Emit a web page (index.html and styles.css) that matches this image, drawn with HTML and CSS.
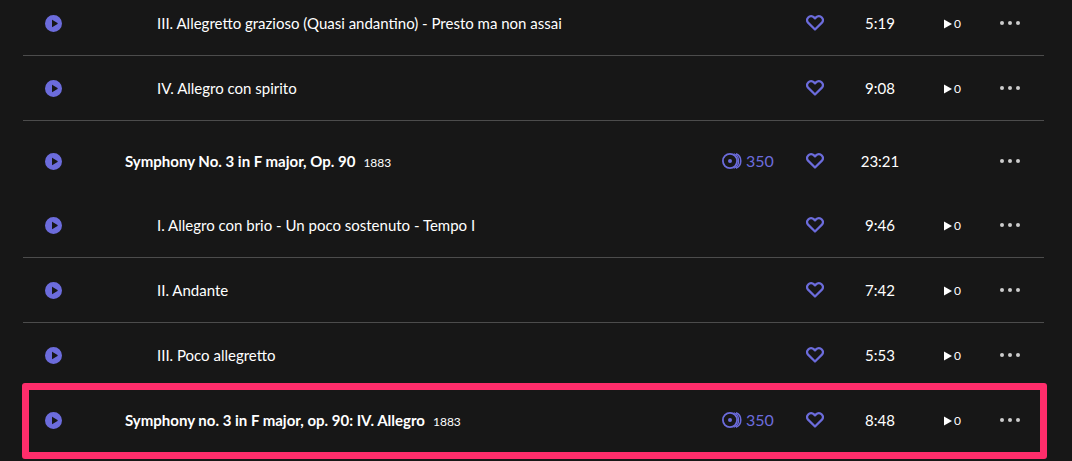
FILE: index.html
```html
<!DOCTYPE html>
<html lang="en">

<head>
	<meta charset="utf-8" />
	<meta name="viewport" content="width=device-width, initial-scale=1" />
	<title>Tracks</title>
	<link rel="stylesheet" href="styles.css">
</head>

<body>
	<!-- shared icons -->
	<svg class="sprite" aria-hidden="true">
		<symbol id="icon-play" viewBox="0 0 17 17">
			<path fill="currentColor" fill-rule="evenodd" d="M8.500 0a8.500 8.500 0 1 0 0 17a8.500 8.500 0 0 0 0-17zM7 5.200v6.600c0 .3.300.4.500.3l5-3.200c.3-.2.3-.6 0-.8l-5-3.200c-.2-.1-.5 0-.5.3z" />
		</symbol>
		<symbol id="icon-heart" viewBox="0 0 18 16">
			<path fill="none" stroke="currentColor" stroke-width="2.200" stroke-linejoin="round" d="M9 14.500 2.300 7.900C.8 6.300.8 4 2.200 2.500c1.600-1.700 4.200-1.700 5.800-.1l1 1 1-1c1.600-1.600 4.200-1.600 5.800.1 1.400 1.500 1.400 3.800-.1 5.400z" />
		</symbol>
		<symbol id="icon-versions" viewBox="0 0 20 16">
			<g fill="none" stroke="currentColor">
				<circle cx="8" cy="8" r="7.100" stroke-width="1.800" />
				<path stroke-width="1.200" d="M11.800.7a7.900 7.900 0 0 1 0 14.600" />
				<path stroke-width="1.500" d="M14 .8a7.800 7.800 0 0 1 0 14.400" />
			</g>
			<circle cx="8" cy="8" r="2" fill="currentColor" />
		</symbol>
		<symbol id="icon-count" viewBox="0 0 8 10">
			<path fill="currentColor" d="M0 .5v9L8 5z" />
		</symbol>
		<symbol id="icon-more" viewBox="0 0 20 4">
			<g fill="currentColor">
				<circle cx="2" cy="2" r="2" />
				<circle cx="10" cy="2" r="2" />
				<circle cx="18" cy="2" r="2" />
			</g>
		</symbol>
	</svg>

	<ul class="tracks">
		<li class="track">
			<button class="play" type="button" aria-label="Play"><svg><use href="#icon-play" /></svg></button>
			<div class="title part">III. Allegretto grazioso (Quasi andantino) - Presto ma non assai</div>
			<button class="like" type="button" aria-label="Like"><svg><use href="#icon-heart" /></svg></button>
			<span class="time">5:19</span>
			<span class="count"><svg><use href="#icon-count" /></svg>0</span>
			<button class="more" type="button" aria-label="More"><svg><use href="#icon-more" /></svg></button>
		</li>
		<li class="track">
			<button class="play" type="button" aria-label="Play"><svg><use href="#icon-play" /></svg></button>
			<div class="title part">IV. Allegro con spirito</div>
			<button class="like" type="button" aria-label="Like"><svg><use href="#icon-heart" /></svg></button>
			<span class="time">9:08</span>
			<span class="count"><svg><use href="#icon-count" /></svg>0</span>
			<button class="more" type="button" aria-label="More"><svg><use href="#icon-more" /></svg></button>
		</li>
		<li class="track work">
			<button class="play" type="button" aria-label="Play"><svg><use href="#icon-play" /></svg></button>
			<div class="title"><b>Symphony No. 3 in F major, Op. 90</b><small>1883</small></div>
			<a class="versions" href="#"><svg><use href="#icon-versions" /></svg>350</a>
			<button class="like" type="button" aria-label="Like"><svg><use href="#icon-heart" /></svg></button>
			<span class="time">23:21</span>
			<button class="more" type="button" aria-label="More"><svg><use href="#icon-more" /></svg></button>
		</li>
		<li class="track">
			<button class="play" type="button" aria-label="Play"><svg><use href="#icon-play" /></svg></button>
			<div class="title part">I. Allegro con brio - Un poco sostenuto - Tempo I</div>
			<button class="like" type="button" aria-label="Like"><svg><use href="#icon-heart" /></svg></button>
			<span class="time">9:46</span>
			<span class="count"><svg><use href="#icon-count" /></svg>0</span>
			<button class="more" type="button" aria-label="More"><svg><use href="#icon-more" /></svg></button>
		</li>
		<li class="track">
			<button class="play" type="button" aria-label="Play"><svg><use href="#icon-play" /></svg></button>
			<div class="title part">II. Andante</div>
			<button class="like" type="button" aria-label="Like"><svg><use href="#icon-heart" /></svg></button>
			<span class="time">7:42</span>
			<span class="count"><svg><use href="#icon-count" /></svg>0</span>
			<button class="more" type="button" aria-label="More"><svg><use href="#icon-more" /></svg></button>
		</li>
		<li class="track">
			<button class="play" type="button" aria-label="Play"><svg><use href="#icon-play" /></svg></button>
			<div class="title part">III. Poco allegretto</div>
			<button class="like" type="button" aria-label="Like"><svg><use href="#icon-heart" /></svg></button>
			<span class="time">5:53</span>
			<span class="count"><svg><use href="#icon-count" /></svg>0</span>
			<button class="more" type="button" aria-label="More"><svg><use href="#icon-more" /></svg></button>
		</li>
		<li class="track marked">
			<button class="play" type="button" aria-label="Play"><svg><use href="#icon-play" /></svg></button>
			<div class="title"><b>Symphony no. 3 in F major, op. 90: IV. Allegro</b><small>1883</small></div>
			<a class="versions" href="#"><svg><use href="#icon-versions" /></svg>350</a>
			<button class="like" type="button" aria-label="Like"><svg><use href="#icon-heart" /></svg></button>
			<span class="time">8:48</span>
			<span class="count"><svg><use href="#icon-count" /></svg>0</span>
			<button class="more" type="button" aria-label="More"><svg><use href="#icon-more" /></svg></button>
		</li>
	</ul>
</body>

</html>
```
FILE: styles.css
```css
body {
	display: flow-root;
	min-height: 100vh;
	margin: 0;
	background-color: #171717;
	color: #fff;
	font: 15px/20px Lato, sans-serif;
}

.sprite {
	display: none;
}

svg {
	display: block;
	flex: none;
}

button {
	display: flex;
	padding: 0;
	border: 0;
	background: none;
	color: inherit;
	font: inherit;
	cursor: pointer;
}

/* the list is scrolled a little past its first row */
.tracks {
	margin: -9px 28px 0 23px;
	padding: 0;
	list-style: none;
}

.track {
	position: relative;
	display: grid;
	grid-template-columns: 102px 1fr 84px 42px 64px 81px 34px;
	align-items: center;
	height: 64px;
	padding-right: 17px;
	border-bottom: 1px solid #4c4c4c;
}

.work {
	padding-top: 8px;
	border-bottom: 0;
}

.play {
	grid-column: 1;
	justify-self: start;
	margin-left: 22px;
	padding-top: 1px;
	color: #6c6cdc;
}

.play svg {
	width: 17px;
	height: 17px;
}

.title {
	grid-column: 2;
}

.part {
	padding-left: 32px;
}

.title small {
	margin-left: 8px;
	font-size: 12px;
	line-height: 12px;
}

.versions {
	grid-column: 3;
	display: flex;
	align-items: center;
	gap: 4px;
	color: #6c6cdc;
	font-size: 16px;
	text-decoration: none;
}

.versions svg {
	width: 20px;
	height: 16px;
}

.like {
	grid-column: 4;
	justify-self: start;
	color: #6c6cdc;
}

.like svg {
	width: 18px;
	height: 16px;
}

.time {
	grid-column: 5;
	text-align: center;
}

.count {
	grid-column: 6;
	display: flex;
	align-items: center;
	justify-content: center;
	gap: 2px;
	padding-top: 2px;
	font-size: 12px;
}

.count svg {
	width: 8px;
	height: 10px;
}

.more {
	grid-column: 7;
	justify-self: center;
	color: #ccc;
}

.more svg {
	width: 20px;
	height: 4px;
}

.marked {
	border-bottom: 0;
}

/* frame drawn over the marked row */
.marked::after {
	content: "";
	position: absolute;
	top: -5px;
	right: -3px;
	bottom: -7px;
	left: -1px;
	border: 7px solid #ff2d6b;
	border-radius: 3px;
	pointer-events: none;
}
```
